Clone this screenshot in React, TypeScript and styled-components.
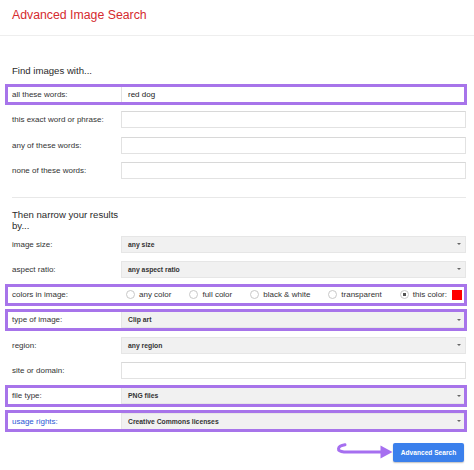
import React from "react";
import styled, { createGlobalStyle, css } from "styled-components";

const GlobalStyle = createGlobalStyle`
  html, body { margin: 0; padding: 0; background: #fff; }
  body {
    font-family: "Liberation Sans", Arial, sans-serif;
    color: #333;
    width: 474px;
    height: 470px;
    overflow: hidden;
  }
`;

const Header = styled.header`
  height: 36px;
  box-sizing: border-box;
  border-bottom: 1px solid #eeeeee;
  padding: 8px 0 0 12px;
`;

const Title = styled.h1`
  margin: 0;
  font-size: 12.3px;
  line-height: 14px;
  font-weight: normal;
  color: #d52b2f;
`;

const Main = styled.main`
  padding-top: 28.7px;
`;

const Heading = styled.h2<{ $narrow?: boolean }>`
  margin: 0 0 0 12px;
  font-size: 9.6px;
  font-weight: normal;
  color: #2a2a2a;
  line-height: ${(p) => (p.$narrow ? "11px" : "12px")};
  ${(p) =>
    p.$narrow &&
    css`
      width: 109px;
      margin-top: 11.3px;
    `}
`;

const Rows = styled.div<{ $gap?: number }>`
  display: flex;
  flex-direction: column;
  margin-left: 5px;
  width: 462px;
  margin-top: ${(p) => p.$gap ?? 0}px;
`;

const Row = styled.div<{ $hl?: boolean }>`
  position: relative;
  display: grid;
  grid-template-columns: 109px 345px;
  align-items: center;
  height: 25.3px;
  padding: 0 1px 0 7px;
  ${(p) =>
    p.$hl &&
    css`
      &::after {
        content: "";
        position: absolute;
        left: 0;
        right: 0;
        top: 1.8px;
        bottom: 1.8px;
        border: 3px solid #a774ea;
        pointer-events: none;
      }
    `}
`;

const Label = styled.span<{ $link?: boolean }>`
  font-size: 8px;
  color: ${(p) => (p.$link ? "#2a57d6" : "#333")};
`;

const TextInput = styled.input`
  box-sizing: border-box;
  width: 345px;
  height: 17px;
  margin: 0;
  border: 1px solid #e2e2e2;
  border-top-color: #d8d8d8;
  background: #fff;
  padding: 0 0 0 6px;
  font-family: "Liberation Sans", Arial, sans-serif;
  font-size: 8px;
  color: #222;
  outline: none;
`;

const Select = styled.div`
  position: relative;
  box-sizing: border-box;
  height: 17px;
  display: flex;
  align-items: center;
  background: #f1f1f1;
  border: 1px solid #e6e6e6;
  padding-left: 6px;
  font-size: 6.8px;
  font-weight: bold;
  color: #333;
`;

const Caret = styled.span`
  margin-left: auto;
  margin-right: 4px;
  width: 0;
  height: 0;
  border-left: 2px solid transparent;
  border-right: 2px solid transparent;
  border-top: 2.5px solid #666;
`;

const RadioGroup = styled.div`
  display: flex;
  justify-content: space-between;
  align-items: center;
  padding: 0 4px 0 5px;
`;

const RadioItem = styled.label`
  display: flex;
  align-items: center;
  gap: 4px;
  font-size: 8px;
  color: #333;
`;

const RadioDot = styled.span<{ $checked?: boolean }>`
  box-sizing: border-box;
  width: 9px;
  height: 9px;
  border-radius: 50%;
  border: 1px solid #c8c8c8;
  background: ${(p) =>
    p.$checked
      ? "radial-gradient(circle, #555 0 1.6px, #fff 1.9px)"
      : "#fff"};
`;

const Swatch = styled.span`
  width: 10px;
  height: 10px;
  background: #ff0000;
  margin-left: 1px;
`;

const Divider = styled.hr`
  margin: 13.9px 8px 0 12px;
  border: 0;
  border-top: 1px solid #e8e8e8;
  height: 0;
`;

const Actions = styled.div`
  display: flex;
  justify-content: flex-end;
  align-items: center;
  margin-top: 9px;
  padding-right: 10px;
`;

const Button = styled.button`
  width: 71px;
  height: 19px;
  border: 0;
  border-radius: 2px;
  background: #3b80ec;
  color: #fff;
  font-family: "Liberation Sans", Arial, sans-serif;
  font-size: 6.6px;
  font-weight: bold;
  padding: 0;
  box-shadow: 0 1px 1.5px rgba(0, 0, 0, 0.25);
`;

const ArrowSvg = styled.svg`
  display: block;
  flex: none;
`;

const PointerArrow = () => (
  <ArrowSvg width="58" height="20" viewBox="0 0 58 20">
    <path
      d="M10 1.8 C 2 3, 1 8.5, 9 9 L 47 9"
      fill="none"
      stroke="#a66ff0"
      strokeWidth="3"
      strokeLinecap="round"
    />
    <polygon points="45.5,2.5 57.5,9 45.5,15.5" fill="#a66ff0" />
  </ArrowSvg>
);

type Field =
  | { kind: "input"; value?: string }
  | { kind: "select"; value: string }
  | { kind: "radios" };

type RowDef = { label: string; field: Field; hl?: boolean; link?: boolean };

const findRows: RowDef[] = [
  { label: "all these words:", field: { kind: "input", value: "red dog" }, hl: true },
  { label: "this exact word or phrase:", field: { kind: "input" } },
  { label: "any of these words:", field: { kind: "input" } },
  { label: "none of these words:", field: { kind: "input" } },
];

const narrowRows: RowDef[] = [
  { label: "image size:", field: { kind: "select", value: "any size" } },
  { label: "aspect ratio:", field: { kind: "select", value: "any aspect ratio" } },
  { label: "colors in image:", field: { kind: "radios" }, hl: true },
  { label: "type of image:", field: { kind: "select", value: "Clip art" }, hl: true },
  { label: "region:", field: { kind: "select", value: "any region" } },
  { label: "site or domain:", field: { kind: "input" } },
  { label: "file type:", field: { kind: "select", value: "PNG files" }, hl: true },
  {
    label: "usage rights:",
    field: { kind: "select", value: "Creative Commons licenses" },
    hl: true,
    link: true,
  },
];

const colors = ["any color", "full color", "black & white", "transparent"];

const FieldView = ({ field }: { field: Field }) => {
  if (field.kind === "input") {
    return <TextInput type="text" defaultValue={field.value ?? ""} readOnly />;
  }
  if (field.kind === "select") {
    return (
      <Select>
        {field.value}
        <Caret />
      </Select>
    );
  }
  return (
    <RadioGroup>
      {colors.map((c) => (
        <RadioItem key={c}>
          <RadioDot />
          {c}
        </RadioItem>
      ))}
      <RadioItem>
        <RadioDot $checked />
        this color:
        <Swatch />
      </RadioItem>
    </RadioGroup>
  );
};

const RowList = ({ rows, gap }: { rows: RowDef[]; gap?: number }) => (
  <Rows $gap={gap}>
    {rows.map((r) => (
      <Row key={r.label} $hl={r.hl}>
        <Label $link={r.link}>{r.label}</Label>
        <FieldView field={r.field} />
      </Row>
    ))}
  </Rows>
);

export default function App() {
  return (
    <>
      <GlobalStyle />
      <Header>
        <Title>Advanced Image Search</Title>
      </Header>
      <Main>
        <Heading>Find images with...</Heading>
        <RowList rows={findRows} gap={5.2} />
        <Divider />
        <Heading $narrow>Then narrow your results by...</Heading>
        <RowList rows={narrowRows} gap={0.2} />
        <Actions>
          <PointerArrow />
          <Button type="button">Advanced Search</Button>
        </Actions>
      </Main>
    </>
  );
}
